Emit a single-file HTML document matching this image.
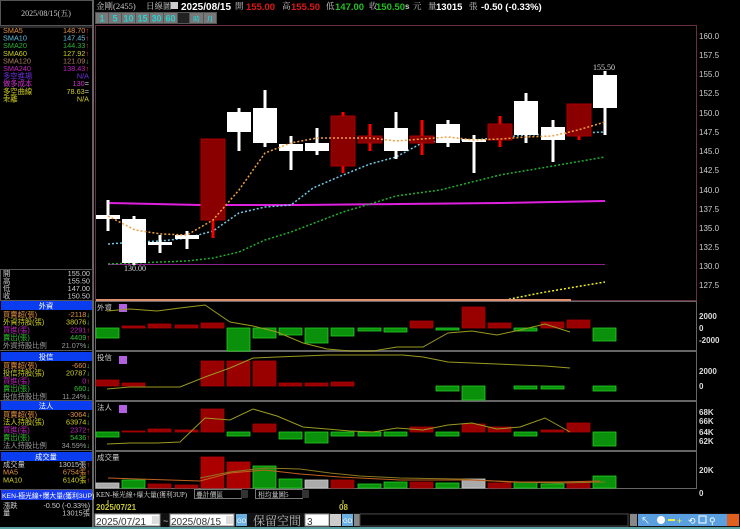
<!DOCTYPE html>
<html><head><meta charset="utf-8"><style>
html,body{margin:0;padding:0;background:#000;width:740px;height:529px;overflow:hidden}
svg{display:block}
text{font-family:"Liberation Sans","Noto Sans CJK TC",sans-serif}
.c{font-family:"Liberation Serif","Noto Serif CJK SC","Noto Sans CJK TC",serif}
</style></head><body>
<svg width="740" height="529" viewBox="0 0 740 529" xmlns="http://www.w3.org/2000/svg">
<rect width="740" height="529" fill="#000"/>
<rect x="0.5" y="0.5" width="92" height="25" fill="#000" stroke="#555"/>
<text x="46" y="16" font-size="8" fill="#ccc" text-anchor="middle" class="c">2025/08/15(五)</text>
<line x1="93" y1="0" x2="93" y2="529" stroke="#666" stroke-width="2"/>
<g font-size="7.3" class="c">
<text x="3" y="33" fill="#e09040">SMA5</text><text x="89" y="33" fill="#e09040" text-anchor="end">148.70<tspan fill="#f33">↑</tspan></text>
<text x="3" y="40.6" fill="#60c0e0">SMA10</text><text x="89" y="40.6" fill="#60c0e0" text-anchor="end">147.45<tspan fill="#f33">↑</tspan></text>
<text x="3" y="48.2" fill="#30b030">SMA20</text><text x="89" y="48.2" fill="#30b030" text-anchor="end">144.33<tspan fill="#f33">↑</tspan></text>
<text x="3" y="55.8" fill="#d0d020">SMA60</text><text x="89" y="55.8" fill="#d0d020" text-anchor="end">127.92<tspan fill="#f33">↑</tspan></text>
<text x="3" y="63.4" fill="#b08060">SMA120</text><text x="89" y="63.4" fill="#b08060" text-anchor="end">121.09<tspan fill="#3c3">↓</tspan></text>
<text x="3" y="71" fill="#c020c0">SMA240</text><text x="89" y="71" fill="#c020c0" text-anchor="end">138.43<tspan fill="#f33">↑</tspan></text>
<text x="3" y="78.6" fill="#7030e0">多空進場</text><text x="89" y="78.6" fill="#7030e0" text-anchor="end">N/A</text>
<text x="3" y="86.2" fill="#d030d0">做多成本</text><text x="89" y="86.2" fill="#d030d0" text-anchor="end">130<tspan fill="#ccc">=</tspan></text>
<text x="3" y="93.8" fill="#d0d020">多空曲線</text><text x="89" y="93.8" fill="#d0d020" text-anchor="end">78.63<tspan fill="#ccc">=</tspan></text>
<text x="3" y="101.4" fill="#d0d020">乖離</text><text x="89" y="101.4" fill="#d0d020" text-anchor="end">N/A</text>
</g>
<line x1="0" y1="27" x2="93" y2="27" stroke="#555"/>
<rect x="0.5" y="269.5" width="92" height="31" fill="none" stroke="#555"/>
<g font-size="7.3" class="c" fill="#ccc">
<text x="3" y="276">開</text><text x="90" y="276" text-anchor="end">155.00</text>
<text x="3" y="283.5">高</text><text x="90" y="283.5" text-anchor="end">155.50</text>
<text x="3" y="291">低</text><text x="90" y="291" text-anchor="end">147.00</text>
<text x="3" y="298.5">收</text><text x="90" y="298.5" text-anchor="end">150.50</text>
</g>
<g font-size="7.3" class="c">
<rect x="1" y="301" width="91" height="9" fill="#0a3cf0"/><text x="46" y="308.5" fill="#fff" text-anchor="middle">外資</text>
<text x="3" y="317" fill="#e09040">買賣超(張)</text><text x="90" y="317" fill="#e09040" text-anchor="end">-2118<tspan fill="#3c3">↓</tspan></text>
<text x="3" y="324.7" fill="#d0d020">外資持股(張)</text><text x="90" y="324.7" fill="#d0d020" text-anchor="end">38076<tspan fill="#3c3">↓</tspan></text>
<text x="3" y="332.4" fill="#c020c0">買進(張)</text><text x="90" y="332.4" fill="#c020c0" text-anchor="end">2291<tspan fill="#f33">↑</tspan></text>
<text x="3" y="340.1" fill="#30c030">賣出(張)</text><text x="90" y="340.1" fill="#30c030" text-anchor="end">4409<tspan fill="#f33">↑</tspan></text>
<text x="3" y="347.8" fill="#999">外資持股比例</text><text x="90" y="347.8" fill="#999" text-anchor="end">21.07%<tspan fill="#3c3">↓</tspan></text>
<rect x="1" y="352" width="91" height="9" fill="#0a3cf0"/><text x="46" y="359.5" fill="#fff" text-anchor="middle">投信</text>
<text x="3" y="368" fill="#e09040">買賣超(張)</text><text x="90" y="368" fill="#e09040" text-anchor="end">-660<tspan fill="#3c3">↓</tspan></text>
<text x="3" y="375.7" fill="#d0d020">投信持股(張)</text><text x="90" y="375.7" fill="#d0d020" text-anchor="end">20787<tspan fill="#3c3">↓</tspan></text>
<text x="3" y="383.4" fill="#c020c0">買進(張)</text><text x="90" y="383.4" fill="#c020c0" text-anchor="end">0<tspan fill="#f33">↑</tspan></text>
<text x="3" y="391.1" fill="#30c030">賣出(張)</text><text x="90" y="391.1" fill="#30c030" text-anchor="end">660<tspan fill="#3c3">↓</tspan></text>
<text x="3" y="398.8" fill="#999">投信持股比例</text><text x="90" y="398.8" fill="#999" text-anchor="end">11.24%<tspan fill="#3c3">↓</tspan></text>
<rect x="1" y="401" width="91" height="9" fill="#0a3cf0"/><text x="46" y="408.5" fill="#fff" text-anchor="middle">法人</text>
<text x="3" y="417" fill="#e09040">買賣超(張)</text><text x="90" y="417" fill="#e09040" text-anchor="end">-3064<tspan fill="#3c3">↓</tspan></text>
<text x="3" y="424.7" fill="#d0d020">法人持股(張)</text><text x="90" y="424.7" fill="#d0d020" text-anchor="end">63974<tspan fill="#3c3">↓</tspan></text>
<text x="3" y="432.4" fill="#c020c0">買進(張)</text><text x="90" y="432.4" fill="#c020c0" text-anchor="end">2372<tspan fill="#f33">↑</tspan></text>
<text x="3" y="440.1" fill="#30c030">賣出(張)</text><text x="90" y="440.1" fill="#30c030" text-anchor="end">5436<tspan fill="#f33">↑</tspan></text>
<text x="3" y="447.8" fill="#999">法人持股比例</text><text x="90" y="447.8" fill="#999" text-anchor="end">34.59%<tspan fill="#3c3">↓</tspan></text>
<rect x="1" y="452" width="91" height="9" fill="#0a3cf0"/><text x="46" y="459.5" fill="#fff" text-anchor="middle">成交量</text>
<text x="3" y="467" fill="#ccc">成交量</text><text x="90" y="467" fill="#ccc" text-anchor="end">13015張<tspan fill="#f33">↑</tspan></text>
<text x="3" y="474.7" fill="#e09040">MA5</text><text x="90" y="474.7" fill="#e09040" text-anchor="end">6754張<tspan fill="#f33">↑</tspan></text>
<text x="3" y="482.4" fill="#d0d020">MA10</text><text x="90" y="482.4" fill="#d0d020" text-anchor="end">6140張<tspan fill="#f33">↑</tspan></text>
<rect x="1" y="490" width="91" height="10" fill="#1a3cf0"/><text x="2" y="498" fill="#fff" font-size="6.8">KEN-極光線+爆大量(獲利3UP)</text>
<text x="3" y="508" fill="#ccc">漲跌</text><text x="90" y="508" fill="#ccc" text-anchor="end">-0.50 (-0.33%)</text>
<text x="3" y="515.5" fill="#ccc">量</text><text x="90" y="515.5" fill="#ccc" text-anchor="end">13015張</text>
</g>
<g stroke="#555"><line x1="0" y1="300.5" x2="93" y2="300.5"/><line x1="0" y1="350.5" x2="93" y2="350.5"/><line x1="0" y1="400.5" x2="93" y2="400.5"/><line x1="0" y1="450.5" x2="93" y2="450.5"/><line x1="0" y1="489.5" x2="93" y2="489.5"/></g>

<g font-size="8.5" font-weight="bold">
<text x="96" y="9" fill="#ccc" font-weight="normal" class="c">金剛(2455)</text>
<text x="146" y="9" fill="#ccc" font-weight="normal" class="c">日線圖</text>
<rect x="171" y="2" width="7" height="7" fill="#ccc"/>
<text x="181" y="10" fill="#fff" font-size="10">2025/08/15</text>
<text x="235" y="9" fill="#ccc" font-weight="normal" class="c">開</text><text x="246" y="10" fill="#e01818" font-size="9.5">155.00</text>
<text x="282" y="9" fill="#ccc" font-weight="normal" class="c">高</text><text x="291" y="10" fill="#e01818" font-size="9.5">155.50</text>
<text x="326" y="9" fill="#ccc" font-weight="normal" class="c">低</text><text x="335" y="10" fill="#20c020" font-size="9.5">147.00</text>
<text x="369" y="9" fill="#ccc" font-weight="normal" class="c">收</text><text x="376" y="10" fill="#20c020" font-size="9.5">150.50</text>
<text x="405" y="9" fill="#ccc" font-size="8">s</text><text x="413" y="9" fill="#ccc" font-weight="normal" class="c">元</text>
<text x="428" y="9" fill="#ccc" font-weight="normal" class="c">量</text><text x="436" y="10" fill="#fff" font-size="9.5">13015</text>
<text x="469" y="9" fill="#ccc" font-weight="normal" class="c">張</text>
<text x="481" y="10" fill="#fff" font-size="9.5">-0.50 (-0.33%)</text>
</g>
<g font-size="9" font-weight="bold" fill="#2ad0d0">
<rect x="95" y="12" width="122" height="12" fill="#555"/>
<rect x="96" y="13" width="12" height="10" fill="#777"/><text x="102" y="21.5" text-anchor="middle">1</text>
<rect x="109" y="13" width="12" height="10" fill="#777"/><text x="115" y="21.5" text-anchor="middle">5</text>
<rect x="122" y="13" width="13" height="10" fill="#777"/><text x="128.5" y="21.5" text-anchor="middle">10</text>
<rect x="136" y="13" width="13" height="10" fill="#777"/><text x="142.5" y="21.5" text-anchor="middle">15</text>
<rect x="150" y="13" width="13" height="10" fill="#777"/><text x="156.5" y="21.5" text-anchor="middle">30</text>
<rect x="164" y="13" width="13" height="10" fill="#777"/><text x="170.5" y="21.5" text-anchor="middle">60</text>
<rect x="178" y="13" width="11" height="10" fill="#222"/>
<rect x="190" y="13" width="13" height="10" fill="#777"/><text x="196.5" y="21" text-anchor="middle" font-size="6.5" class="c">時</text>
<rect x="204" y="13" width="12" height="10" fill="#777"/><text x="210" y="21" text-anchor="middle" font-size="6.5" class="c">月</text>
</g>

<rect x="95.5" y="25.5" width="601" height="275" fill="none" stroke="#6a3040"/>
<g font-size="8" fill="#ccc" class="c">
<text x="699" y="39">160.0</text><text x="699" y="58">157.5</text><text x="699" y="77">155.0</text><text x="699" y="96">152.5</text><text x="699" y="116">150.0</text><text x="699" y="135">147.5</text><text x="699" y="154">145.0</text><text x="699" y="173">142.5</text><text x="699" y="193">140.0</text><text x="699" y="212">137.5</text><text x="699" y="231">135.0</text><text x="699" y="250">132.5</text><text x="699" y="269">130.0</text><text x="699" y="288">127.5</text>
</g>
<line x1="108" y1="264.5" x2="605" y2="264.5" stroke="#902090" stroke-width="1"/>
<polyline points="108,203 200,205 300,205 400,204 500,203 605,201" fill="none" stroke="#e020e0" stroke-width="2"/>
<polyline points="108,264 135,263 187,261 213,258 239,252 265,240 291,232 317,222 343,212 370,204 396,196 440,190 500,175 553,166 605,157" fill="none" stroke="#20b030" stroke-width="1.5" stroke-dasharray="2,2"/>
<polyline points="108,244 135,242 161,241 187,238 213,231 239,213 265,207 291,205 313,188 343,175 370,164 396,157 422,143 448,140 474,140 526,135 578,133 605,132" fill="none" stroke="#70c8e8" stroke-width="1.5" stroke-dasharray="2,2"/>
<polyline points="505,300 540,293 575,287 605,282" fill="none" stroke="#f0f020" stroke-width="1.5" stroke-dasharray="2,2"/>
<g>
<rect x="106.5" y="200" width="3" height="31" fill="#fff"/><rect x="96" y="215" width="24" height="4" fill="#fff"/>
<rect x="132.5" y="216" width="3" height="49" fill="#fff"/><rect x="122" y="219" width="24" height="44" fill="#fff"/>
<rect x="158.5" y="235" width="3" height="18" fill="#fff"/><rect x="148" y="242" width="24" height="3" fill="#fff"/>
<rect x="185.5" y="231" width="3" height="18" fill="#fff"/><rect x="175" y="235" width="24" height="4" fill="#fff"/>
<rect x="211.5" y="220" width="3" height="18" fill="#f00"/><rect x="201" y="139" width="24" height="81" fill="#8a0000" stroke="#a00"/>
<rect x="237.5" y="108" width="3" height="43" fill="#fff"/><rect x="227" y="112" width="24" height="20" fill="#fff"/>
<rect x="263.5" y="90" width="3" height="57" fill="#fff"/><rect x="253" y="108" width="24" height="35" fill="#fff"/>
<rect x="289.5" y="136" width="3" height="34" fill="#fff"/><rect x="279" y="144" width="24" height="7" fill="#fff"/>
<rect x="315.5" y="128" width="3" height="27" fill="#fff"/><rect x="305" y="143" width="24" height="8" fill="#fff"/>
<rect x="341.5" y="112" width="3" height="61" fill="#f00"/><rect x="331" y="116" width="24" height="50" fill="#8a0000" stroke="#a00"/>
<rect x="368.5" y="124" width="3" height="27" fill="#f00"/><rect x="358" y="136" width="24" height="7" fill="#8a0000" stroke="#a00"/>
<rect x="394.5" y="112" width="3" height="47" fill="#fff"/><rect x="384" y="128" width="24" height="23" fill="#fff"/>
<rect x="420.5" y="120" width="3" height="35" fill="#f00"/><rect x="410" y="136" width="24" height="7" fill="#8a0000" stroke="#a00"/>
<rect x="446.5" y="120" width="3" height="27" fill="#fff"/><rect x="436" y="124" width="24" height="19" fill="#fff"/>
<rect x="472.5" y="135" width="3" height="38" fill="#fff"/><rect x="462" y="139" width="24" height="3" fill="#fff"/>
<rect x="498.5" y="116" width="3" height="31" fill="#f00"/><rect x="488" y="124" width="24" height="16" fill="#8a0000" stroke="#a00"/>
<rect x="524.5" y="93" width="3" height="50" fill="#fff"/><rect x="514" y="101" width="24" height="34" fill="#fff"/>
<rect x="551.5" y="120" width="3" height="42" fill="#fff"/><rect x="541" y="127" width="24" height="13" fill="#fff"/>
<rect x="577.5" y="134" width="3" height="6" fill="#f00"/><rect x="567" y="104" width="24" height="32" fill="#8a0000" stroke="#a00"/>
<rect x="603.5" y="71" width="3" height="64" fill="#fff"/><rect x="593" y="75" width="24" height="33" fill="#fff"/>
</g>
<polyline points="108,216 135,230 161,234 187,235 213,220 239,190 265,153 291,143 317,138 343,138 370,138 396,141 422,139 448,137 474,140 500,139 526,137 552,136 578,130 605,122" fill="none" stroke="#f0a040" stroke-width="1.5" stroke-dasharray="2,2"/>
<text x="604" y="70" font-size="8" fill="#ddd" text-anchor="middle" class="c">155.50</text>
<text x="135" y="271" font-size="8" fill="#ddd" text-anchor="middle" class="c">130.00</text>
<line x1="96" y1="300" x2="571" y2="300" stroke="#e09070" stroke-width="2"/>

<g stroke="#666" fill="none">
<rect x="95.5" y="301.5" width="601" height="49"/>
<rect x="95.5" y="351.5" width="601" height="49"/>
<rect x="95.5" y="401.5" width="601" height="49"/>
<rect x="95.5" y="451.5" width="601" height="37"/>
</g>
<g font-size="7.5" fill="#ccc" class="c">
<text x="97" y="310">外資</text><text x="97" y="360">投信</text><text x="97" y="410">法人</text><text x="97" y="460">成交量</text>
</g>
<g fill="#b060e0"><rect x="119" y="304" width="8" height="8"/><rect x="119" y="356" width="8" height="8"/><rect x="119" y="405" width="8" height="8"/></g>
<g stroke-width="0.8">
<rect x="96" y="328" width="23" height="10" fill="#0a900a" stroke="#2c2"/>
<rect x="122" y="326" width="23" height="2" fill="#900" stroke="#a00"/>
<rect x="148" y="324" width="23" height="4" fill="#900" stroke="#a00"/>
<rect x="175" y="325" width="23" height="3" fill="#900" stroke="#a00"/>
<rect x="201" y="323" width="23" height="5" fill="#900" stroke="#a00"/>
<rect x="227" y="328" width="23" height="23" fill="#0a900a" stroke="#2c2"/>
<rect x="253" y="328" width="23" height="10" fill="#0a900a" stroke="#2c2"/>
<rect x="279" y="328" width="23" height="7" fill="#0a900a" stroke="#2c2"/>
<rect x="305" y="328" width="23" height="15" fill="#0a900a" stroke="#2c2"/>
<rect x="331" y="328" width="23" height="8" fill="#0a900a" stroke="#2c2"/>
<rect x="358" y="328" width="23" height="3" fill="#0a900a" stroke="#2c2"/>
<rect x="384" y="328" width="23" height="4" fill="#0a900a" stroke="#2c2"/>
<rect x="410" y="321" width="23" height="7" fill="#900" stroke="#a00"/>
<rect x="436" y="328" width="23" height="2" fill="#0a900a" stroke="#2c2"/>
<rect x="462" y="307" width="23" height="21" fill="#900" stroke="#a00"/>
<rect x="488" y="323" width="23" height="5" fill="#900" stroke="#a00"/>
<rect x="514" y="328" width="23" height="3" fill="#0a900a" stroke="#2c2"/>
<rect x="541" y="322" width="23" height="6" fill="#900" stroke="#a00"/>
<rect x="567" y="320" width="23" height="8" fill="#900" stroke="#a00"/>
<rect x="593" y="328" width="23" height="13" fill="#0a900a" stroke="#2c2"/>
</g>
<polyline points="107,311 130,309 157,311 180,308 205,305 230,322 253,326 277,332 303,343 327,349 350,351 373,351 397,347 423,347 448,333 472,331 497,335 520,330 545,324 570,332" fill="none" stroke="#9a9a20" stroke-width="1"/>
<g stroke-width="0.8">
<rect x="96" y="380" width="23" height="6" fill="#900" stroke="#a00"/>
<rect x="122" y="383" width="23" height="3" fill="#900" stroke="#a00"/>
<rect x="201" y="361" width="23" height="25" fill="#900" stroke="#a00"/>
<rect x="227" y="361" width="23" height="25" fill="#900" stroke="#a00"/>
<rect x="253" y="361" width="23" height="25" fill="#900" stroke="#a00"/>
<rect x="279" y="383" width="23" height="3" fill="#900" stroke="#a00"/>
<rect x="305" y="383" width="23" height="3" fill="#900" stroke="#a00"/>
<rect x="331" y="382" width="23" height="4" fill="#900" stroke="#a00"/>
<rect x="436" y="386" width="23" height="5" fill="#0a900a" stroke="#2c2"/>
<rect x="462" y="386" width="23" height="14" fill="#0a900a" stroke="#2c2"/>
<rect x="514" y="386" width="23" height="3" fill="#0a900a" stroke="#2c2"/>
<rect x="541" y="386" width="23" height="3" fill="#0a900a" stroke="#2c2"/>
<rect x="593" y="386" width="23" height="5" fill="#0a900a" stroke="#2c2"/>
</g>
<polyline points="107,389 130,387 157,387 180,387 205,377 230,368 253,358 277,357 303,356 327,355 350,355 373,355 403,355 423,357 448,362 472,363 497,364 520,365 545,366 570,368" fill="none" stroke="#9a9a20" stroke-width="1"/>
<g stroke-width="0.8">
<rect x="96" y="432" width="23" height="5" fill="#0a900a" stroke="#2c2"/>
<rect x="122" y="431" width="23" height="1" fill="#900" stroke="#a00"/>
<rect x="148" y="429" width="23" height="3" fill="#900" stroke="#a00"/>
<rect x="175" y="430" width="23" height="2" fill="#900" stroke="#a00"/>
<rect x="201" y="409" width="23" height="23" fill="#900" stroke="#a00"/>
<rect x="227" y="432" width="23" height="4" fill="#0a900a" stroke="#2c2"/>
<rect x="253" y="424" width="23" height="8" fill="#900" stroke="#a00"/>
<rect x="279" y="432" width="23" height="7" fill="#0a900a" stroke="#2c2"/>
<rect x="305" y="432" width="23" height="11" fill="#0a900a" stroke="#2c2"/>
<rect x="331" y="432" width="23" height="4" fill="#0a900a" stroke="#2c2"/>
<rect x="358" y="432" width="23" height="4" fill="#0a900a" stroke="#2c2"/>
<rect x="384" y="432" width="23" height="4" fill="#0a900a" stroke="#2c2"/>
<rect x="410" y="427" width="23" height="5" fill="#900" stroke="#a00"/>
<rect x="436" y="432" width="23" height="4" fill="#0a900a" stroke="#2c2"/>
<rect x="462" y="424" width="23" height="8" fill="#900" stroke="#a00"/>
<rect x="488" y="427" width="23" height="5" fill="#900" stroke="#a00"/>
<rect x="514" y="432" width="23" height="4" fill="#0a900a" stroke="#2c2"/>
<rect x="541" y="430" width="23" height="2" fill="#900" stroke="#a00"/>
<rect x="567" y="423" width="23" height="9" fill="#900" stroke="#a00"/>
<rect x="593" y="432" width="23" height="14" fill="#0a900a" stroke="#2c2"/>
</g>
<polyline points="107,444 130,443 157,443 180,442 205,418 230,420 253,409 277,416 303,427 327,429 350,431 373,432 397,428 423,430 448,425 472,423 497,429 520,427 545,418 570,432" fill="none" stroke="#9a9a20" stroke-width="1"/>
<g stroke-width="0.8">
<rect x="96" y="483" width="23" height="5" fill="#aaa" stroke="#ccc"/>
<rect x="122" y="480" width="23" height="8" fill="#0a900a" stroke="#2c2"/>
<rect x="148" y="484" width="23" height="4" fill="#900" stroke="#a00"/>
<rect x="175" y="485" width="23" height="3" fill="#900" stroke="#a00"/>
<rect x="201" y="457" width="23" height="31" fill="#a00" stroke="#b00"/>
<rect x="227" y="462" width="23" height="26" fill="#a00" stroke="#b00"/>
<rect x="253" y="466" width="23" height="22" fill="#0a900a" stroke="#2c2"/>
<rect x="279" y="479" width="23" height="9" fill="#0a900a" stroke="#2c2"/>
<rect x="305" y="480" width="23" height="8" fill="#aaa" stroke="#ccc"/>
<rect x="331" y="480" width="23" height="8" fill="#900" stroke="#a00"/>
<rect x="358" y="484" width="23" height="4" fill="#0a900a" stroke="#2c2"/>
<rect x="384" y="482" width="23" height="6" fill="#0a900a" stroke="#2c2"/>
<rect x="410" y="482" width="23" height="6" fill="#900" stroke="#a00"/>
<rect x="436" y="483" width="23" height="5" fill="#0a900a" stroke="#2c2"/>
<rect x="462" y="479" width="23" height="9" fill="#aaa" stroke="#ccc"/>
<rect x="488" y="483" width="23" height="5" fill="#900" stroke="#a00"/>
<rect x="514" y="482" width="23" height="6" fill="#0a900a" stroke="#2c2"/>
<rect x="541" y="484" width="23" height="4" fill="#0a900a" stroke="#2c2"/>
<rect x="567" y="482" width="23" height="6" fill="#900" stroke="#a00"/>
<rect x="593" y="476" width="23" height="12" fill="#0a900a" stroke="#2c2"/>
</g>
<polyline points="200,478 230,472 265,468 300,469 330,473 360,476 400,478 460,479 510,482 560,483 605,482" fill="none" stroke="#8a7a20" stroke-width="1"/>
<polyline points="108,478 200,481 230,473 265,470 300,474 340,477 400,480 470,480 520,482 560,482 600,481" fill="none" stroke="#c06020" stroke-width="1"/>
<rect x="95" y="489" width="602" height="10" fill="#000"/>
<text x="96" y="497" font-size="6.8" fill="#ddd" class="c">KEN-極光線+爆大量(獲利3UP)</text>
<rect x="194.5" y="489.5" width="47" height="9" fill="#000" stroke="#777"/><text x="196" y="497" font-size="6.8" fill="#ddd" class="c">疊計價區</text>
<rect x="241" y="490" width="7" height="8" fill="#333"/>
<rect x="255.5" y="489.5" width="47" height="9" fill="#000" stroke="#777"/><text x="258" y="497" font-size="6.8" fill="#ddd" class="c">相均量圖5</text>
<rect x="302" y="490" width="7" height="8" fill="#333"/>
<g font-size="8" fill="#ddd" font-weight="bold">
<text x="699" y="319">2000</text><text x="699" y="331">0</text><text x="699" y="343">-2000</text>
<text x="699" y="374">2000</text><text x="699" y="389">0</text>
<text x="699" y="415">68K</text><text x="699" y="424">66K</text><text x="699" y="435">64K</text><text x="699" y="444">62K</text>
<text x="699" y="473">20K</text><text x="699" y="496">0</text>
</g>
<line x1="108" y1="500" x2="108" y2="504" stroke="#cc4"/>
<line x1="343" y1="500" x2="343" y2="504" stroke="#cc4"/>
<text x="96" y="510" font-size="8" fill="#c8c830" font-weight="bold">2025/07/21</text>
<text x="339" y="510" font-size="8" fill="#c8c830" font-weight="bold">08</text>
<rect x="95" y="513" width="645" height="14" fill="#111"/>
<rect x="95" y="514" width="65" height="12" fill="#fff" stroke="#888"/><text x="96" y="525" font-size="10" fill="#333">2025/07/21</text>
<rect x="152" y="516" width="7" height="8" fill="#ddd"/>
<text x="163" y="524" font-size="9" fill="#ccc">~</text>
<rect x="170" y="514" width="64" height="12" fill="#fff" stroke="#888"/><text x="171" y="525" font-size="10" fill="#333">2025/08/15</text>
<rect x="226" y="516" width="7" height="8" fill="#ddd"/>
<rect x="236" y="514" width="11" height="12" fill="#6ab0e0"/><text x="237" y="523" font-size="6" fill="#fff">GO</text>
<text x="253" y="525" font-size="12" fill="#bbb" class="c">保留空間</text>
<rect x="305" y="514" width="24" height="12" fill="#fff" stroke="#888"/><text x="307" y="525" font-size="10" fill="#333">3</text>
<rect x="330" y="514" width="11" height="12" fill="#ccc"/>
<rect x="342" y="514" width="11" height="12" fill="#6ab0e0"/><text x="343" y="523" font-size="6" fill="#fff">GO</text>
<rect x="354" y="514" width="6" height="12" fill="#888"/>
<rect x="360" y="514" width="268" height="12" fill="#000" stroke="#444"/>
<rect x="630" y="514" width="7" height="12" fill="#888"/>
<g fill="#5aa0e0"><rect x="638" y="514" width="101" height="12"/></g>
<g fill="#fff" font-size="9">
<text x="641" y="524">↖</text><circle cx="661" cy="520" r="4"/><rect x="668" y="519" width="7" height="2" fill="#ee4"/>
<text x="677" y="524" fill="#ee4">+</text><text x="688" y="524">⟲</text><rect x="699" y="516" width="7" height="7" fill="none" stroke="#fff"/><text x="709" y="524">⚲</text>
</g>
<rect x="727" y="514" width="12" height="12" fill="#e06020"/>
<rect x="0" y="527" width="740" height="2" fill="#5aa0a0"/>
</svg>
</body></html>
